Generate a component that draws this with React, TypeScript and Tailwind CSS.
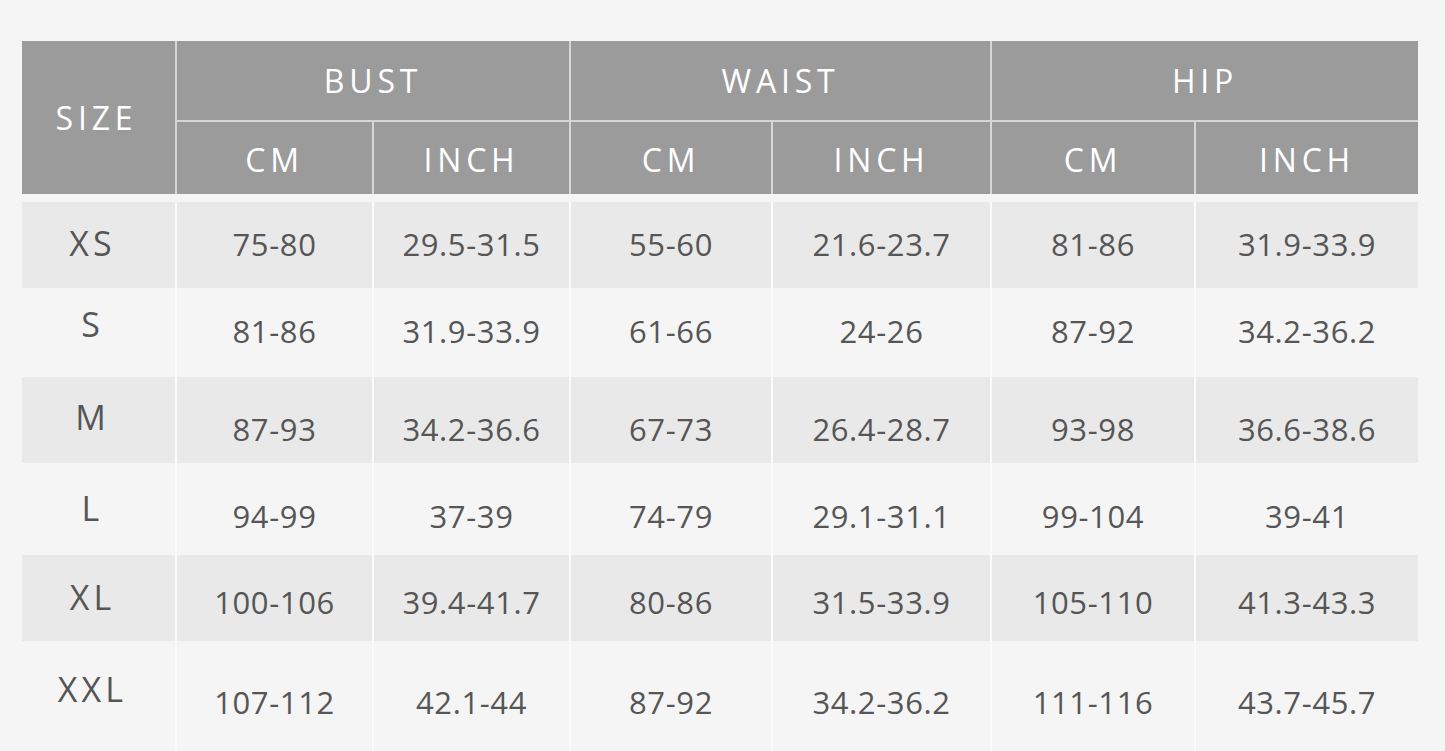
import React from 'react';

const ROWS = [
  { size: 'XS', vals: ['75-80', '29.5-31.5', '55-60', '21.6-23.7', '81-86', '31.9-33.9'], h: 'h-[86px]', shade: true, sp: 'pb-[3px]', vp: 'pb-[2px]' },
  { size: 'S', vals: ['81-86', '31.9-33.9', '61-66', '24-26', '87-92', '34.2-36.2'], h: 'h-[89px]', shade: false, sp: 'pb-[16px]', vp: 'pb-[2px]' },
  { size: 'M', vals: ['87-93', '34.2-36.6', '67-73', '26.4-28.7', '93-98', '36.6-38.6'], h: 'h-[86px]', shade: true, sp: 'pb-[6px]', vp: 'pt-[18px]' },
  { size: 'L', vals: ['94-99', '37-39', '74-79', '29.1-31.1', '99-104', '39-41'], h: 'h-[92px]', shade: false, sp: 'pb-[2px]', vp: 'pt-[14px]' },
  { size: 'XL', vals: ['100-106', '39.4-41.7', '80-86', '31.5-33.9', '105-110', '41.3-43.3'], h: 'h-[86px]', shade: true, sp: 'pb-[2px]', vp: 'pt-[8px]' },
  { size: 'XXL', vals: ['107-112', '42.1-44', '87-92', '34.2-36.2', '111-116', '43.7-45.7'], h: 'h-[110px]', shade: false, sp: 'pb-[14px]', vp: 'pt-[12px]' },
];

const COLS = 'grid-cols-[153px_197px_197px_202px_219px_204px_224px]';

export default function App() {
  return (
    <div
      className="w-[1445px] h-[751px] overflow-hidden bg-[#f5f5f5] pt-[41px] pl-[22px]"
      style={{ fontFamily: '"Open Sans", "Noto Sans", sans-serif' }}
    >
      <div className="w-[1396px]">
        {/* Header */}
        <div className={`grid ${COLS} grid-rows-[81px_72px] bg-[#9b9b9b] text-white tracking-[0.15em] text-[32px]`}>
          <div className="row-span-2 flex items-center justify-center pr-1">SIZE</div>
          <div className="col-span-2 flex items-center justify-center border-l-2 border-[#d6d6d6] border-b-2">BUST</div>
          <div className="col-span-2 flex items-center justify-center border-l-2 border-[#d6d6d6] border-b-2">WAIST</div>
          <div className="col-span-2 flex items-center justify-center border-l-2 border-[#d6d6d6] border-b-2">HIP</div>
          {['CM', 'INCH', 'CM', 'INCH', 'CM', 'INCH'].map((t, i) => (
            <div key={i} className="flex items-center justify-center border-l-2 border-[#d6d6d6] pt-1">
              {t}
            </div>
          ))}
        </div>

        {/* Body */}
        <div className="mt-[8px]">
          {ROWS.map((r) => (
            <div key={r.size} className={`grid ${COLS} ${r.h} ${r.shade ? 'bg-[#e9e9e9]' : 'bg-[#f5f5f5]'} text-[#565656]`}>
              <div className={`flex items-center justify-center pr-3 text-[34px] tracking-[0.12em] ${r.sp}`}>{r.size}</div>
              {r.vals.map((v, i) => (
                <div key={i} className={`flex items-center justify-center border-l-2 border-[#fbfbfb] text-[31px] tracking-[0.02em] ${r.vp}`}>
                  {v}
                </div>
              ))}
            </div>
          ))}
        </div>
      </div>
    </div>
  );
}
